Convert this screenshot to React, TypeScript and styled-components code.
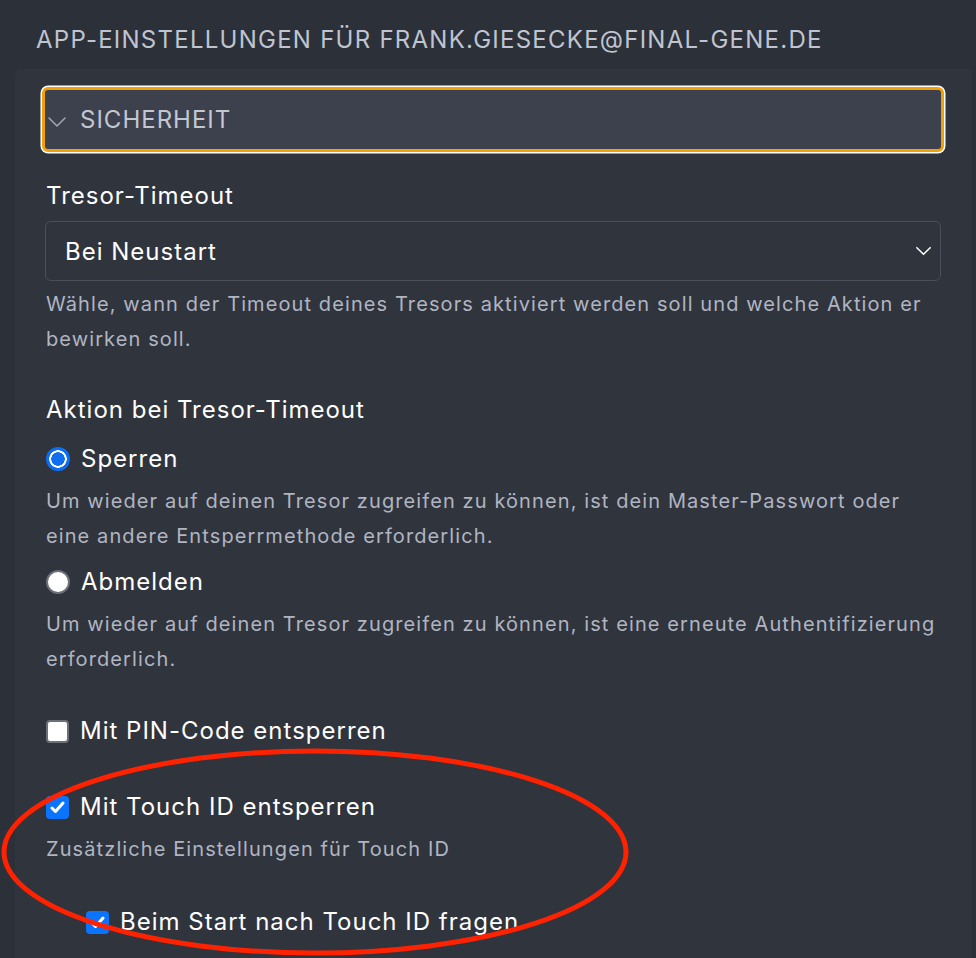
import React from 'react';
import styled, { createGlobalStyle } from 'styled-components';

const GlobalStyle = createGlobalStyle`
  html, body {
    margin: 0;
    padding: 0;
    background: #2c3038;
  }
  body {
    font-family: Inter, Roboto, 'Noto Sans', sans-serif;
    -webkit-font-smoothing: antialiased;
  }
`;

const Page = styled.div`
  position: relative;
  width: 976px;
  height: 958px;
  overflow: hidden;
  background: #2c3038;
`;

const PageTitle = styled.h1`
  margin: 0;
  padding: 25px 0 14px 36px;
  font-size: 24px;
  line-height: 30px;
  font-weight: 400;
  letter-spacing: 1.25px;
  text-transform: uppercase;
  color: #bfc4d0;
`;

const Panel = styled.div`
  margin-left: 15px;
  width: 956px;
  box-sizing: border-box;
  min-height: 900px;
  padding: 18px 27px 0;
  background: #30343d;
  border-radius: 5px 0 0 0;
`;

const SectionToggle = styled.button`
  display: flex;
  align-items: center;
  gap: 14px;
  width: 100%;
  height: 65px;
  box-sizing: border-box;
  padding: 0 0 0 3px;
  margin: 0;
  border: 3px solid #f0a00c;
  border-radius: 6px;
  box-shadow: 0 0 0 1.5px #ffffff;
  background: #3c414d;
  color: #c3c7d2;
  font-family: inherit;
  font-size: 24px;
  line-height: 30px;
  letter-spacing: 1px;
  text-transform: uppercase;
  text-align: left;
`;

const ToggleIcon = styled.svg`
  flex: none;
  margin-top: 5px;
`;

const Body = styled.div`
  padding: 0 3px;
`;

const FieldLabel = styled.div<{ $top: number }>`
  margin-top: ${(p) => p.$top}px;
  padding-left: 1px;
  font-size: 24px;
  line-height: 30px;
  letter-spacing: 1px;
  color: #ffffff;
`;

const SelectBox = styled.div`
  margin-top: 10px;
  height: 60px;
  box-sizing: border-box;
  display: flex;
  align-items: center;
  justify-content: space-between;
  padding: 0 8px 0 19px;
  border: 1.5px solid #4a4f5b;
  border-radius: 6px;
  font-size: 24px;
  letter-spacing: 1px;
  color: #ffffff;
`;

const Help = styled.div<{ $top: number }>`
  margin-top: ${(p) => p.$top}px;
  padding-left: 1px;
  font-size: 20px;
  line-height: 35px;
  letter-spacing: 1.1px;
  color: #b0b5c2;
`;

const OptionRow = styled.div<{ $top: number; $indent?: number }>`
  display: flex;
  align-items: center;
  gap: 11px;
  margin-top: ${(p) => p.$top}px;
  padding-left: ${(p) => 1 + (p.$indent ?? 0)}px;
  font-size: 24px;
  line-height: 30px;
  letter-spacing: 1px;
  color: #ffffff;
`;

const Radio = styled.span<{ $checked?: boolean }>`
  flex: none;
  width: 24px;
  height: 24px;
  box-sizing: border-box;
  border-radius: 50%;
  ${(p) =>
    p.$checked
      ? `background: radial-gradient(circle, #0f6ff0 0 6.5px, #ffffff 7px 8.5px, #0d6ef5 9px);`
      : `background: #ffffff; border: 2px solid #6c7078;`}
`;

const Check = styled.span<{ $checked?: boolean }>`
  flex: none;
  display: flex;
  align-items: center;
  justify-content: center;
  width: 23px;
  height: 23px;
  box-sizing: border-box;
  border-radius: 4px;
  ${(p) =>
    p.$checked
      ? `background: #0b74ff;`
      : `background: #ffffff; border: 2px solid #6c7078;`}
`;

const Annotation = styled.svg`
  position: absolute;
  left: 0;
  top: 0;
  pointer-events: none;
`;

const SelectChevron = () => (
  <svg width={17} height={10} viewBox="0 0 20 12" fill="none" style={{ flex: 'none' }}>
    <path d="M2 2 L10 10 L18 2" stroke="#ffffff" strokeWidth="1.8" strokeLinecap="round" strokeLinejoin="round" />
  </svg>
);

const Tick = () => (
  <svg width="15" height="13" viewBox="0 0 15 13" fill="none">
    <path d="M2 7 L5.5 10.5 L13 2" stroke="#ffffff" strokeWidth="3" strokeLinecap="round" strokeLinejoin="round" />
  </svg>
);

export default function App() {
  return (
    <Page>
      <GlobalStyle />
      <PageTitle>App-Einstellungen für frank.giesecke@final-gene.de</PageTitle>
      <Panel>
        <SectionToggle>
          <ToggleIcon width="18" height="10" viewBox="0 0 18 10" fill="none">
            <path d="M1 1 L9 9 L17 1" stroke="#a3a8b5" strokeWidth="1.5" strokeLinecap="round" strokeLinejoin="round" />
          </ToggleIcon>
          Sicherheit
        </SectionToggle>
        <Body>
          <FieldLabel $top={29}>Tresor-Timeout</FieldLabel>
          <SelectBox>
            Bei Neustart
            <SelectChevron />
          </SelectBox>
          <Help $top={6}>
            Wähle, wann der Timeout deines Tresors aktiviert werden soll und welche Aktion er bewirken soll.
          </Help>

          <FieldLabel $top={38}>Aktion bei Tresor-Timeout</FieldLabel>
          <OptionRow $top={19}>
            <Radio $checked />
            Sperren
          </OptionRow>
          <Help $top={10}>
            Um wieder auf deinen Tresor zugreifen zu können, ist dein Master-Passwort oder eine andere Entsperrmethode erforderlich.
          </Help>
          <OptionRow $top={13}>
            <Radio />
            Abmelden
          </OptionRow>
          <Help $top={10}>
            Um wieder auf deinen Tresor zugreifen zu können, ist eine erneute Authentifizierung erforderlich.
          </Help>

          <OptionRow $top={39}>
            <Check />
            Mit PIN-Code entsperren
          </OptionRow>
          <OptionRow $top={46}>
            <Check $checked>
              <Tick />
            </Check>
            Mit Touch ID entsperren
          </OptionRow>
          <Help $top={10}>Zusätzliche Einstellungen für Touch ID</Help>
          <OptionRow $top={40} $indent={40}>
            <Check $checked>
              <Tick />
            </Check>
            Beim Start nach Touch ID fragen
          </OptionRow>
        </Body>
      </Panel>
      <Annotation width="976" height="958" viewBox="0 0 976 958">
        <ellipse cx="315" cy="852" rx="311" ry="101" fill="none" stroke="#ff2200" strokeWidth="5" />
      </Annotation>
    </Page>
  );
}
